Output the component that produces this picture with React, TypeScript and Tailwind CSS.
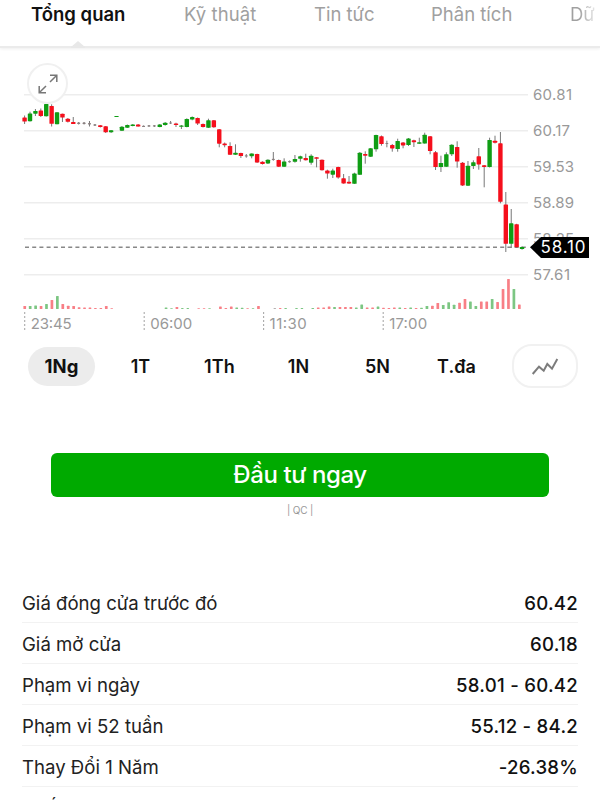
import React from 'react'

type Tone = 'g' | 'r' | 'n'
// slot, tone, body top, body bottom, wick top, wick bottom
type Candle = [number, Tone, number, number, number, number]

const CANDLES: Candle[] = [
  [0, 'r', 117.5, 121.5, 115.5, 124], [1, 'g', 113.5, 121.2, 111.7, 121.5], [2, 'g', 111, 113.7, 109, 116],
  [3, 'r', 110.5, 116, 108.5, 117], [4, 'g', 104, 116.3, 104, 116.5], [5, 'r', 106, 123.8, 104.3, 126.5],
  [6, 'g', 112.3, 124.2, 112.3, 124.2], [7, 'r', 113.7, 117.5, 113.7, 122], [8, 'r', 118.7, 121.8, 118, 122.5],
  [9, 'r', 122, 124, 117, 124], [10, 'n', 122.5, 124, 122, 124.5], [11, 'n', 122.5, 124, 122, 124.5],
  [12, 'n', 123, 124.5, 121, 126.5], [13, 'n', 124.3, 125.7, 124, 126], [14, 'r', 125.2, 127, 125, 127.5],
  [15, 'r', 126.3, 132.3, 126, 133], [16, 'g', 130.3, 132.3, 130, 133], [17, 'g', 116, 117, 116, 117],
  [18, 'g', 126.7, 130.7, 126, 131], [19, 'g', 125, 127.7, 124.5, 128], [20, 'g', 124.4, 126, 124, 126.3],
  [21, 'r', 124.4, 126.5, 124, 126.7], [22, 'n', 125.7, 127, 125.5, 127], [23, 'n', 125.3, 126.5, 125, 127],
  [24, 'n', 125.3, 126.5, 125, 127], [25, 'g', 124.4, 127, 124, 127.3], [26, 'g', 122.7, 125, 122, 125.7],
  [27, 'n', 122.4, 123.4, 121, 124], [28, 'r', 123.6, 125, 122.7, 127], [29, 'g', 125.5, 126.8, 125, 129],
  [30, 'g', 119, 127, 118.3, 127.3], [31, 'g', 117, 119.5, 116.4, 120.3], [32, 'r', 118, 123.5, 117.5, 125],
  [33, 'r', 124, 127, 123.5, 127.5], [34, 'g', 120.3, 127.8, 118.7, 128], [35, 'r', 120.3, 127.3, 120, 127.8],
  [36, 'r', 129.3, 143.7, 129, 147.3], [37, 'r', 143.6, 145.2, 142.5, 147.3], [38, 'r', 146, 154.8, 142.3, 155],
  [39, 'g', 152.7, 154.8, 144.3, 155], [40, 'r', 153, 156, 152.7, 158], [41, 'n', 155.3, 156.5, 154, 157.7],
  [42, 'g', 153.6, 156.2, 153.4, 158.3], [43, 'r', 154, 162.5, 153.7, 163], [44, 'r', 161.7, 164, 161.3, 164.5],
  [45, 'g', 159.7, 163.4, 159.3, 164], [46, 'n', 158.7, 160, 152, 160.7], [47, 'r', 160, 166.7, 159.5, 167],
  [48, 'g', 161.5, 166.7, 158.3, 167], [49, 'n', 160.9, 162.3, 160.5, 162.6], [50, 'g', 159, 161.8, 155, 162.7],
  [51, 'g', 156.3, 158.8, 155.7, 161.7], [52, 'r', 158, 160.2, 153.7, 160.5], [53, 'g', 155.7, 162.7, 154.3, 164.7],
  [54, 'r', 157.2, 158.8, 157, 167.3], [55, 'r', 159.7, 170.2, 159.5, 170.5], [56, 'r', 170.6, 173.5, 169.7, 178.7],
  [57, 'g', 170.6, 174.7, 168.7, 178], [58, 'r', 167, 177.4, 166.7, 178.7], [59, 'r', 178.3, 183.4, 174, 183.7],
  [60, 'r', 181.8, 183.5, 176, 184], [61, 'g', 173.6, 183.8, 172.7, 184], [62, 'g', 152.7, 174.8, 152, 175],
  [63, 'r', 154, 155.7, 151.3, 163.7], [64, 'g', 148.3, 156.7, 148, 157], [65, 'g', 135, 149.3, 134.7, 151.7],
  [66, 'r', 136.3, 144, 135.5, 145.7], [67, 'n', 143, 144, 140.7, 147.3], [68, 'r', 145, 148.4, 144, 151.7],
  [69, 'g', 141, 149, 138.7, 151.7], [70, 'r', 142.6, 145.4, 142, 148.3], [71, 'g', 138.6, 145, 138, 146],
  [72, 'r', 140.3, 142.2, 139.7, 147], [73, 'g', 142.2, 143.8, 137.7, 144], [74, 'g', 134.7, 143.5, 132.7, 143.7],
  [75, 'r', 136.3, 151, 136, 154.3], [76, 'r', 152.3, 167, 151, 170], [77, 'g', 163, 167, 155.7, 172],
  [78, 'g', 154.2, 166.8, 152.3, 167], [79, 'g', 144.7, 154.3, 144.2, 156], [80, 'r', 147, 161.5, 141.3, 167.7],
  [81, 'r', 162.7, 185.4, 162, 186], [82, 'g', 165.7, 185.7, 161, 186], [83, 'g', 162.3, 166, 160.3, 169],
  [84, 'r', 156.3, 164.4, 148, 169.7], [85, 'r', 165.2, 166.9, 165, 187.3], [86, 'g', 140, 167, 137.7, 167.5],
  [87, 'r', 140.7, 142.8, 135.7, 143.5], [88, 'r', 143.3, 201.8, 132, 203.3], [89, 'r', 204.5, 243.8, 192, 252],
  [90, 'g', 223.3, 243.8, 209, 248], [91, 'r', 224.2, 247.2, 223.8, 248], [92, 'g', 247, 249, 246.3, 249.7],
]

const VOLUMES: [number, Tone, number][] = [
  [0, 'r', 3], [1, 'g', 3], [2, 'g', 3.5], [3, 'r', 3], [4, 'g', 5], [5, 'r', 9], [6, 'g', 13], [7, 'r', 5],
  [8, 'r', 3.3], [9, 'r', 3], [10, 'r', 1.8], [11, 'r', 1.4], [12, 'r', 1.4], [13, 'r', 1], [14, 'r', 1],
  [15, 'r', 3], [16, 'r', 0.7], [26, 'g', 1.5], [27, 'g', 0.8], [28, 'r', 2], [29, 'g', 0.9], [30, 'g', 0.9],
  [32, 'r', 0.8], [33, 'r', 0.8], [34, 'g', 0.8], [36, 'r', 2.6], [37, 'r', 1], [38, 'r', 2.6], [39, 'g', 1.5],
  [40, 'g', 1.2], [41, 'r', 0.8], [42, 'g', 0.8], [43, 'r', 3], [46, 'n', 0.9], [47, 'r', 0.9], [48, 'g', 0.9],
  [50, 'g', 0.9], [51, 'g', 0.9], [53, 'g', 1.1], [54, 'r', 1.6], [55, 'r', 1.4], [56, 'r', 2.6], [57, 'g', 2],
  [58, 'r', 2], [59, 'r', 2], [60, 'r', 2], [61, 'g', 1.5], [62, 'g', 4.5], [63, 'r', 1.6], [64, 'r', 1.6],
  [65, 'g', 2.6], [66, 'r', 1.2], [67, 'r', 1], [68, 'r', 1.4], [69, 'g', 1.6], [70, 'r', 1], [71, 'g', 1.5],
  [72, 'r', 1], [73, 'g', 1.2], [74, 'g', 3], [75, 'r', 3.3], [76, 'r', 6], [77, 'g', 4], [78, 'g', 6.7],
  [79, 'g', 4.3], [80, 'r', 6.3], [81, 'r', 10], [82, 'g', 7.5], [83, 'g', 3], [84, 'r', 7.5], [85, 'r', 7.5],
  [86, 'g', 10], [87, 'r', 7], [88, 'r', 20], [89, 'r', 30], [90, 'g', 20], [91, 'r', 4.5],
]

const BODY = { g: '#0f9d14', r: '#f50f1c', n: '#8a7f7f' }
const VOLUME = { g: '#7cc683', r: '#f87f86', n: '#b5b0b0' }

const PRICES = [
  { label: '60.81', y: 94.7, w: 39 },
  { label: '60.17', y: 130.7, w: 37 },
  { label: '59.53', y: 166.7, w: 41 },
  { label: '58.89', y: 202.7, w: 41 },
  { label: '58.25', y: 238.7, w: 41 },
  { label: '57.61', y: 274.7, w: 37 },
]

const TIMES = [
  { label: '23:45', x: 24.7, w: 41 },
  { label: '06:00', x: 144.2, w: 42 },
  { label: '11:30', x: 263.6, w: 37 },
  { label: '17:00', x: 383.2, w: 38 },
]

const RANGES = ['1T', '1Th', '1N', '5N', 'T.đa']

const STATS = [
  { label: 'Giá đóng cửa trước đó', value: '60.42' },
  { label: 'Giá mở cửa', value: '60.18' },
  { label: 'Phạm vi ngày', value: '58.01 - 60.42' },
  { label: 'Phạm vi 52 tuần', value: '55.12 - 84.2' },
  { label: 'Thay Đổi 1 Năm', value: '-26.38%' },
  { label: 'Khối lượng', value: '318.620' },
]

const TabBar = () => (
  <nav className="relative flex h-[48px] w-[600px] shrink-0 whitespace-nowrap border-b-2 border-[#ebebeb] pl-[31px] pt-[1px] text-[18.5px] leading-[27px] text-[#a0a0a0] shadow-[0_1px_3px_rgba(0,0,0,0.07)]">
    <span className="w-[153px] font-semibold text-[#111]">Tổng quan</span>
    <span className="w-[130px] tracking-[0.1px]">Kỹ thuật</span>
    <span className="w-[117px]">Tin tức</span>
    <span className="w-[139px]">Phân tích</span>
    <span className="w-[30px] overflow-hidden bg-gradient-to-r from-[#a0a0a0] from-30% to-white bg-clip-text text-transparent">Dữ</span>
    <svg className="absolute left-[71px] top-[40px]" width="14" height="8" viewBox="0 0 14 8">
      <path d="M0 7 7 1 14 7V8H0Z" fill="#e8e8e8" />
    </svg>
  </nav>
)

const PriceChart = () => (
  <div className="relative h-[288px] shrink-0">
    <svg width="600" height="288" viewBox="0 48 600 288" className="block">
      {PRICES.map(p => (
        <g key={p.label}>
          <path d={`M24 ${p.y}H528`} stroke="#ededed" strokeWidth="1.6" />
          <text x="533" y={p.y + 5.5} fontSize="15" fill="#999" textLength={p.w}>{p.label}</text>
        </g>
      ))}
      {VOLUMES.map(([i, tone, h]) => (
        <rect key={i} x={23.4 + i * 5.435} y={309 - h} width="2.7" height={h} rx="0.5" fill={VOLUME[tone]} />
      ))}
      <path d="M25 247.2H527" stroke="#888" strokeWidth="1.4" strokeDasharray="4 3.2" />
      {CANDLES.map(([i, tone, top, bottom, high, low]) => {
        const x = 24.6 + i * 5.407
        const w = tone === 'n' ? 3 : 4.4
        return (
          <g key={i}>
            <path d={`M${x} ${high}V${low}`} stroke="#777" strokeWidth="1" />
            <rect x={x - w / 2} y={top} width={w} height={bottom - top} rx="0.6" fill={BODY[tone]} />
          </g>
        )
      })}
      {TIMES.map(t => (
        <g key={t.label}>
          <path d={`M${t.x} 312V332`} stroke="#aaa" strokeWidth="1.1" strokeDasharray="2 2" />
          <text x={t.x + 6} y="328.5" fontSize="15" fill="#999" textLength={t.w}>{t.label}</text>
        </g>
      ))}
      <path d="M530 247.3 541 237H589V258H541Z" fill="#000" />
      <text x="540.5" y="253.2" fontSize="17" fill="#fff" textLength="45">58.10</text>
    </svg>
    <button className="absolute left-[27px] top-[15px] flex size-[41px] items-center justify-center rounded-full border-2 border-[#f0f0f0] bg-white">
      <svg width="20" height="20" viewBox="0 0 20 20" fill="none" stroke="#777" strokeWidth="1.5">
        <path d="M12 8 18.8 1.2M12 1.2h6.8V8M8 12 1.2 18.8M1.2 12v6.8H8" />
      </svg>
    </button>
  </div>
)

const RangePicker = () => (
  <div className="flex h-[60px] shrink-0 items-center pl-[28px] text-[18px] font-semibold text-[#111]">
    <button className="h-[39px] w-[67px] rounded-full bg-[#ececec] pt-[2px] text-[18.5px] font-bold">1Ng</button>
    <div className="flex w-[397px] pl-[6px] tracking-[0.1px]">
      {RANGES.map(r => (
        <button key={r} className="w-[79px] shrink-0 text-center">{r}</button>
      ))}
    </div>
    <button className="ml-[20px] flex h-[44px] w-[66px] items-center justify-center rounded-[20px] border-2 border-[#f1f1f1]">
      <svg width="28" height="20" viewBox="0 0 28 20" fill="none" stroke="#7c7c7c" strokeWidth="2">
        <path d="M1.7 18 8 10.7 12.7 14.7 16.3 8 21 12.7 26.3 3" />
      </svg>
    </button>
  </div>
)

const App: React.FC = () => {
  return (
    <div className="flex h-[800px] w-[600px] flex-col overflow-hidden bg-white font-['Inter',sans-serif]">
      <TabBar />
      <PriceChart />
      <RangePicker />

      {/* Sponsored link */}
      <div className="mt-[57px] flex h-[129px] shrink-0 flex-col items-center">
        <button className="h-[44px] w-[498px] rounded-[6px] bg-[#00aa00] text-[24px] font-medium leading-[44px] tracking-[-0.4px] text-white">
          Đầu tư ngay
        </button>
        <span className="mt-[6px] text-[10px] leading-[14px] tracking-[-0.2px] text-[#999]">| QC |</span>
      </div>

      <dl className="shrink-0 px-[22px]">
        {STATS.map(s => (
          <div key={s.label} className="flex h-[41px] items-center justify-between border-b border-[#f2f2f2] pt-[3px] text-[18.6px] text-[#222]">
            <dt>{s.label}</dt>
            <dd className="font-medium tracking-[0.25px] text-[#111]">{s.value}</dd>
          </div>
        ))}
      </dl>
    </div>
  )
}

export default App
